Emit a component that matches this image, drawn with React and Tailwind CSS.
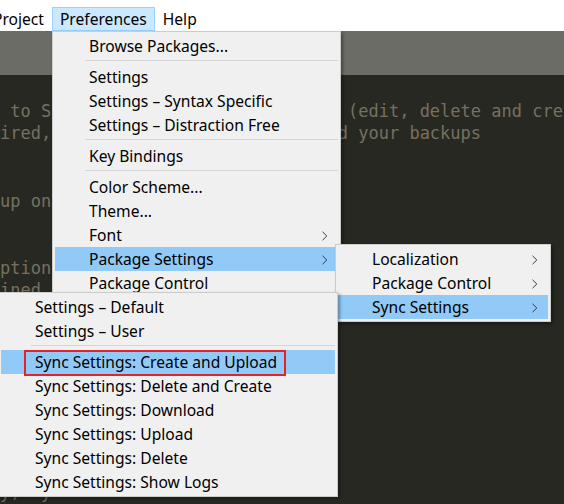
import clsx from "clsx";

// Small right-pointing chevron used for submenu entries.
const Chevron = () => (
	<svg width="6" height="10" viewBox="0 0 6 10" className="ml-auto shrink-0">
		<polyline points="0.5,0.8 4.8,5 0.5,9.2" fill="none" stroke="#3a3a3a" strokeWidth="1" />
	</svg>
);

const Item = ({ label, sub, active, children }) => (
	<div
		className={clsx(
			"relative flex items-center h-6 pt-[2px] pl-[34px] pr-[10px] whitespace-nowrap text-black",
			active && "bg-[#91c9f7]"
		)}
	>
		<span>{label}</span>
		{sub && <Chevron />}
		{children}
	</div>
);

const Sep = () => (
	<div className="pt-[2px] pb-[4px] pl-[30px]">
		<div className="h-px bg-[#d5d5d5]"></div>
	</div>
);

const Menu = ({ className, children }) => (
	<div
		className={clsx(
			"absolute bg-[#f0f0f0] border border-[#cccccc] p-[2px] shadow-[2px_2px_3px_rgba(0,0,0,0.35)]",
			className
		)}
	>
		{children}
	</div>
);

const lines = [
	" to Sync Settings, and your gists (edit, delete and create)",
	"ired, it will then be used to hold your backups",
	"",
	"",
	"up on each computer",
	"",
	"",
	"ption",
	"ined",
	"",
	"",
	"",
	"",
	"",
	"",
	"",
	"",
	"y,  y",
];

const App = () => {
	return (
		<div className="relative w-[564px] h-[504px] overflow-hidden bg-white flex flex-col font-['Noto_Sans',sans-serif] text-[15.6px]">
			{/* Menu bar */}
			<div className="flex h-[31px] pt-[7px] -ml-[15px] shrink-0">
				<div className="h-6 pt-[2px] px-[7px] border border-transparent flex items-center">Project</div>
				<div className="h-6 pt-[2px] px-[7px] border border-[#99d1ff] bg-[#cce8ff] flex items-center">Preferences</div>
				<div className="h-6 pt-[2px] px-[7px] border border-transparent flex items-center">Help</div>
			</div>

			{/* Tab strip */}
			<div className="h-[44px] bg-[#6c6c66] shrink-0"></div>

			{/* Editor */}
			<div className="flex-1 bg-[#282822] pt-[25px] font-['DejaVu_Sans_Mono',monospace] text-[17px] leading-[22.4px] text-[#75715e] whitespace-pre overflow-hidden">
				{lines.map((l, i) => (
					<div key={i} className="h-[22.4px]">{l}</div>
				))}
			</div>

			{/* Preferences menu */}
			<Menu className="left-[52px] top-[31px] w-[289px]">
				<Item label="Browse Packages..." />
				<Sep />
				<Item label="Settings" />
				<Item label="Settings – Syntax Specific" />
				<Item label="Settings – Distraction Free" />
				<Sep />
				<Item label="Key Bindings" />
				<Sep />
				<Item label="Color Scheme..." />
				<Item label="Theme..." />
				<Item label="Font" sub />
				<Item label="Package Settings" sub active />
				<Item label="Package Control" />
			</Menu>

			{/* Package Settings submenu */}
			<Menu className="left-[335px] top-[244px] w-[216px]">
				<Item label="Localization" sub />
				<Item label="Package Control" sub />
				<Item label="Sync Settings" sub active />
			</Menu>

			{/* Sync Settings submenu */}
			<Menu className="left-[-2px] top-[292px] w-[340px]">
				<Item label="Settings – Default" />
				<Item label="Settings – User" />
				<Sep />
				<Item label="Sync Settings: Create and Upload" active>
					<div className="absolute left-[23px] top-0 w-[262px] h-[26px] border-2 border-[#e3232b]"></div>
				</Item>
				<Item label="Sync Settings: Delete and Create" />
				<Item label="Sync Settings: Download" />
				<Item label="Sync Settings: Upload" />
				<Item label="Sync Settings: Delete" />
				<Item label="Sync Settings: Show Logs" />
			</Menu>
		</div>
	);
};

export default App;
